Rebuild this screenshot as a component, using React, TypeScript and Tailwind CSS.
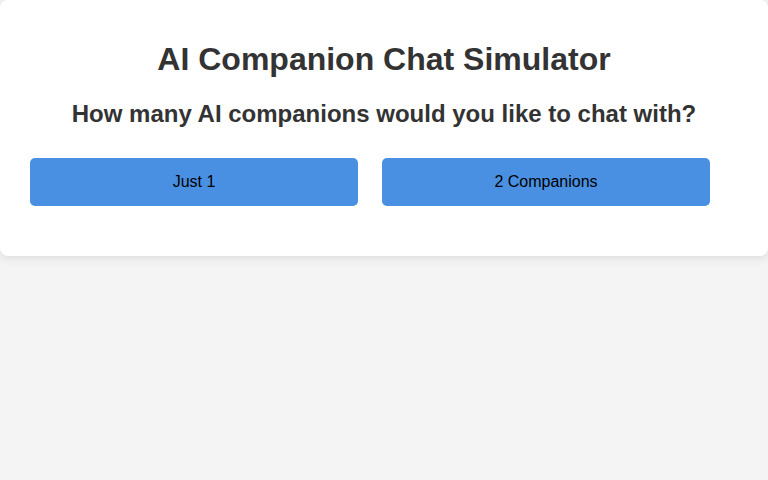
import React from 'react';

const App: React.FC = () => {
  const options = ['Just 1', '2 Companions'];

  return (
    <div className="min-h-screen w-full bg-[#f4f4f4] font-['Liberation_Sans',Arial,sans-serif] text-[#333]">
      <div className="w-full rounded-lg bg-white px-[30px] pt-[41px] pb-[50px] shadow-[0_2px_10px_rgba(0,0,0,0.1)]">
        <h1 className="text-center text-[32px] font-bold leading-[37px]">AI Companion Chat Simulator</h1>
        <h2 className="mt-[22px] text-center text-[24px] font-bold leading-[28px]">
          How many AI companions would you like to chat with?
        </h2>
        <div className="mt-[30px] flex gap-6">
          {options.map((label) => (
            <button
              key={label}
              className="h-12 w-[328px] rounded-[5px] bg-[#4a90e2] text-base text-black"
            >
              {label}
            </button>
          ))}
        </div>
      </div>
    </div>
  );
};

export default App;
